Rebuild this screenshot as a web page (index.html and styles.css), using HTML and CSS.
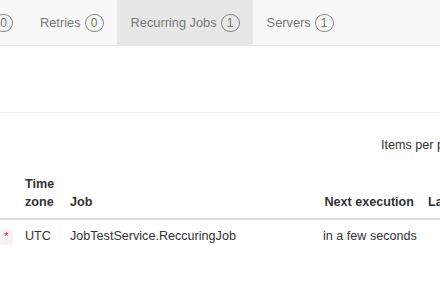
FILE: index.html
```html
<!DOCTYPE html>
<html>
<head>
    <title>Recurring Jobs</title>
    <link rel="stylesheet" href="styles.css">
</head>
<body>
    <div class="navbar">
        <ul class="nav">
            <li class="nav-item nav-cut"><span class="badge">0</span></li>
            <li class="nav-item">Retries <span class="badge">0</span></li>
            <li class="nav-item active">Recurring Jobs <span class="badge">1</span></li>
            <li class="nav-item">Servers <span class="badge">1</span></li>
        </ul>
    </div>

    <div class="page-header"></div>

    <div class="toolbar">
        <span class="per-page">Items per page</span>
    </div>

    <table class="jobs">
        <thead>
            <tr>
                <th class="col-cron"></th>
                <th class="col-tz">Time<br>zone</th>
                <th class="col-job">Job</th>
                <th class="col-next">Next execution</th>
                <th class="col-last">Last execution</th>
            </tr>
        </thead>
        <tbody>
            <tr>
                <td class="col-cron"><code>*</code></td>
                <td class="col-tz">UTC</td>
                <td class="col-job">JobTestService.ReccuringJob</td>
                <td class="col-next">in a few seconds</td>
                <td class="col-last"></td>
            </tr>
        </tbody>
    </table>
</body>
</html>
```

FILE: styles.css
```css
html, body {
    margin: 0;
    padding: 0;
    overflow: hidden;
}

body {
    font-family: "Liberation Sans", Arial, sans-serif;
    font-size: 12.6px;
    line-height: 18px;
    color: #333;
    background-color: white;
    width: 440px;
}

.navbar {
    background-color: #f8f8f8;
    border-bottom: 1px solid #e7e7e7;
    height: 45px;
    overflow: hidden;
}

.nav {
    list-style: none;
    margin: 0;
    padding: 0;
    display: flex;
    white-space: nowrap;
}

.nav-item {
    color: #777;
    font-size: 12.8px;
    padding: 13.5px 13.5px;
    line-height: 18px;
    display: flex;
    align-items: center;
    gap: 4px;
}

.nav-cut {
    margin-left: -19.5px;
}

.nav-item.active {
    background-color: #e7e7e7;
}

.badge {
    display: inline-block;
    border: 1px solid #888;
    border-radius: 9px;
    padding: 0 4px;
    min-width: 9px;
    height: 16px;
    line-height: 16px;
    font-size: 12px;
    text-align: center;
    color: #777;
}

.page-header {
    height: 66px;
    border-bottom: 1px solid #eee;
}

.toolbar {
    padding-top: 23px;
    padding-left: 381px;
    white-space: nowrap;
    height: 18px;
}

.jobs {
    margin-top: 14px;
    border-collapse: collapse;
    table-layout: fixed;
    width: 600px;
}

.jobs th,
.jobs td {
    padding: 7px;
    text-align: left;
    vertical-align: bottom;
    white-space: nowrap;
    overflow: hidden;
}

.jobs th {
    font-weight: bold;
    border-bottom: 2px solid #ddd;
}

.jobs td {
    vertical-align: top;
}

.col-cron {
    width: 11px;
}

.col-tz {
    width: 31px;
}

.col-job {
    width: 239px;
}

.col-next {
    width: 91px;
}

.jobs .col-next {
    text-align: right;
}

.col-last {
    width: 165px;
}

.jobs .col-cron {
    padding-left: 0;
}

code {
    font-family: "Liberation Mono", monospace;
    font-size: 11px;
    color: #c7254e;
    background-color: #f9f2f4;
    border-radius: 3px;
    padding: 2px 3px;
}
```
